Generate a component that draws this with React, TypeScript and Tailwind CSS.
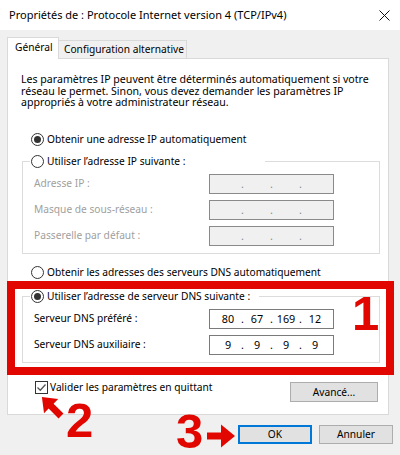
import React from 'react';

function Radio({ checked }: { checked?: boolean }) {
  return (
    <span className="w-[13px] h-[13px] rounded-full border border-[#333] bg-white flex items-center justify-center shrink-0">
      {checked && <span className="w-[7px] h-[7px] rounded-full bg-[#333]" />}
    </span>
  );
}

function RadioRow({ label, checked }: { label: string; checked?: boolean }) {
  return (
    <div className="flex items-center gap-[3px] h-[13px] leading-[13px] whitespace-nowrap">
      <Radio checked={checked} />
      <span>{label}</span>
    </div>
  );
}

function IpBox({ values, disabled }: { values: string[]; disabled?: boolean }) {
  const cells: React.ReactNode[] = [];
  values.forEach((v, i) => {
    cells.push(
      <span key={'o' + i} className="w-[22px] text-center">
        {v}
      </span>
    );
    if (i < 3) {
      cells.push(
        <span key={'d' + i} className={`w-[7px] text-center ${disabled ? 'text-[#8a8a8a]' : ''}`}>
          .
        </span>
      );
    }
  });
  return (
    <div
      className={`w-[125px] h-[20px] border flex items-center px-[7px] text-[10.8px] leading-[18px] ${
        disabled ? 'bg-[#f0f0f0] border-[#8a8a8a]' : 'bg-white border-[#7a7a7a]'
      }`}
    >
      {cells}
    </div>
  );
}

function FieldRow({ label, values, disabled }: { label: string; values: string[]; disabled?: boolean }) {
  return (
    <div className="flex items-center h-[20px] pl-[11px]">
      <span className={`w-[175px] ${disabled ? 'text-[#a0a0a0]' : ''}`}>{label}</span>
      <IpBox values={values} disabled={disabled} />
    </div>
  );
}

export default function App() {
  const empty = ['', '', '', ''];

  return (
    <div className="w-[400px] h-[455px] bg-[#f0f0f0] relative overflow-hidden font-['Noto_Sans',sans-serif] text-[10.2px] text-black">
      {/* title bar */}
      <div className="h-[30px] bg-white flex items-center justify-between pl-[9px] pr-[10px]">
        <span className="text-[11px]">Propriétés de : Protocole Internet version 4 (TCP/IPv4)</span>
        <svg width="11" height="11" viewBox="0 0 11 11">
          <path d="M0.5 0.5 L10.5 10.5 M10.5 0.5 L0.5 10.5" stroke="#111" strokeWidth="1" />
        </svg>
      </div>

      <div className="px-[7px] pt-[7px]">
        {/* tabs */}
        <div className="flex items-end h-[21px]">
          <div className="relative z-10 -mb-[1px] h-[22px] w-[52px] bg-white border border-b-0 border-[#d9d9d9] pl-[7px] pt-[3px] leading-[13px]">
            Général
          </div>
          <div className="h-[18px] w-[128px] bg-[#f0f0f0] border border-l-0 border-b-0 border-[#d9d9d9] pl-[5px] pt-[2px] leading-[13px] whitespace-nowrap">
            Configuration alternative
          </div>
        </div>

        {/* tab panel */}
        <div className="h-[357px] w-[382px] bg-white border border-[#d9d9d9] flex flex-col">
          <p className="pl-[13px] pt-[15px] text-[10.6px] leading-[11.5px]">
            Les paramètres IP peuvent être déterminés automatiquement si votre
            <br />
            réseau le permet. Sinon, vous devez demander les paramètres IP
            <br />
            appropriés à votre administrateur réseau.
          </p>

          <div className="ml-[23px] mt-[24px]">
            <RadioRow label="Obtenir une adresse IP automatiquement" checked />
          </div>

          <fieldset className="ml-[14px] mr-[8px] mt-[9px] border border-[#dcdcdc] pb-[7px]">
            <legend className="ml-[7px] pl-[1px]">
              <div className="w-[234px]">
                <RadioRow label="Utiliser l’adresse IP suivante :" />
              </div>
            </legend>
            <div className="flex flex-col gap-[6px] pt-[6px]">
              <FieldRow label="Adresse IP :" values={empty} disabled />
              <FieldRow label="Masque de sous-réseau :" values={empty} disabled />
              <FieldRow label="Passerelle par défaut :" values={empty} disabled />
            </div>
          </fieldset>

          <div className="ml-[23px] mt-[12px]">
            <RadioRow label="Obtenir les adresses des serveurs DNS automatiquement" />
          </div>

          <fieldset className="ml-[14px] mr-[8px] mt-[11px] border border-[#dcdcdc] pb-[7px]">
            <legend className="ml-[7px] pl-[1px]">
              <div className="w-[228px]">
                <RadioRow label="Utiliser l’adresse de serveur DNS suivante :" checked />
              </div>
            </legend>
            <div className="flex flex-col gap-[6px] pt-[6px]">
              <FieldRow label="Serveur DNS préféré :" values={['80', '67', '169', '12']} />
              <FieldRow label="Serveur DNS auxiliaire :" values={['9', '9', '9', '9']} />
            </div>
          </fieldset>

          <div className="flex justify-between items-start mt-[18px] pl-[27px] pr-[10px]">
            <div className="flex items-center gap-[2px] h-[13px] leading-[13px]">
              <span className="w-[13px] h-[13px] border border-[#333] bg-white flex items-center justify-center">
                <svg width="11" height="11" viewBox="0 0 11 11">
                  <path d="M1.5 5.5 L4.3 8.3 L9.5 2.5" fill="none" stroke="#555" strokeWidth="1.3" />
                </svg>
              </span>
              <span>Valider les paramètres en quittant</span>
            </div>
            <button className="mt-[1px] w-[88px] h-[20px] bg-[#e1e1e1] border border-[#adadad] leading-[18px]">
              Avancé...
            </button>
          </div>
        </div>

        {/* dialog buttons */}
        <div className="flex justify-end gap-[7px] mt-[10px]">
          <button className="w-[74px] h-[19px] bg-[#e1e1e1] border-2 border-[#0078d7] leading-[15px]">OK</button>
          <button className="w-[74px] h-[19px] bg-[#e1e1e1] border border-[#adadad] leading-[17px]">Annuler</button>
        </div>
      </div>

      {/* annotations */}
      <div className="absolute left-[7px] top-[281px] w-[387px] h-[94px] border-[8px] border-[#e10600] pointer-events-none" />
      <div className="absolute left-[352px] top-[294px] font-['Liberation_Sans',Arial,sans-serif] font-bold text-[49px] leading-[38px] text-[#e10600]">
        1
      </div>
      <div className="absolute left-[66px] top-[401px] font-['Liberation_Sans',Arial,sans-serif] font-bold text-[49px] leading-[38px] text-[#e10600]">
        2
      </div>
      <div className="absolute left-[176px] top-[412px] font-['Liberation_Sans',Arial,sans-serif] font-bold text-[49px] leading-[38px] text-[#e10600]">
        3
      </div>
      <svg className="absolute left-0 top-0 pointer-events-none" width="400" height="455" viewBox="0 0 400 455">
        <g transform="translate(61 416) rotate(-135)">
          <polygon points="0,-3.5 14,-3.5 14,-10 27,0 14,10 14,3.5 0,3.5" fill="#e10600" />
        </g>
        <polygon points="207,432.5 221,432.5 221,424.5 235,436 221,447.5 221,439.5 207,439.5" fill="#e10600" />
      </svg>
    </div>
  );
}
